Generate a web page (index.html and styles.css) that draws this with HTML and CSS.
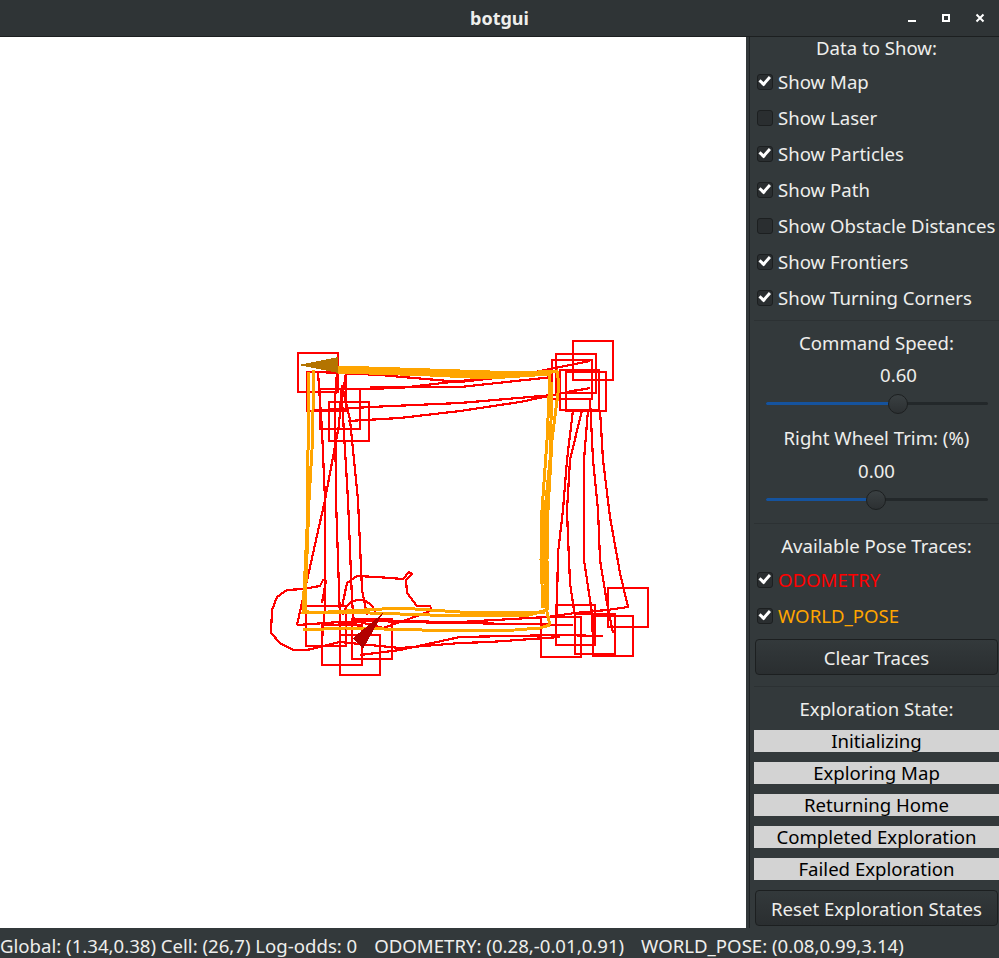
FILE: index.html
```html
<!DOCTYPE html>
<html lang="en">
<head>
    <meta charset="UTF-8">
    <title>botgui</title>
    <link rel="stylesheet" href="styles.css">
</head>
<body>

<header class="titlebar">
    <span class="title">botgui</span>
    <div class="window-buttons">
        <svg width="10" height="10" viewBox="0 0 10 10"><rect x="1" y="7" width="8" height="2" fill="#fff"/></svg>
        <svg width="10" height="10" viewBox="0 0 10 10"><path d="M1 1h8v8h-8z M3 3v4h4v-4z" fill="#fff" fill-rule="evenodd"/></svg>
        <svg width="10" height="10" viewBox="0 0 10 10"><path d="M1.5 1.5l7 7M8.5 1.5l-7 7" stroke="#fff" stroke-width="2" fill="none"/></svg>
    </div>
</header>

<div class="main">
    <div class="map">
        <svg width="746" height="891" viewBox="0 37 746 891" shape-rendering="crispEdges">
            <!-- odometry trace -->
            <g fill="none" stroke="#ff0000" stroke-width="2.2">
                <path d="M318 372L322 430L325 500L325 607L322 640"/>
                <path d="M337 372L335 400L336 500L340 620L340 640"/>
                <path d="M346 372L342 400L348 500L352 600L354 625"/>
                <path d="M342 385L350 420L358 500L362 590L367 615"/>
                <path d="M342 385L339 425L325 500L297 625"/>
                <path d="M318 372L380 375L460 382L505 377L550 373"/>
                <path d="M360 389L400 388L460 381L520 375L590 361"/>
                <path d="M370 387L460 387L553 377"/>
                <path d="M307 411L370 407L460 403L553 395L590 388"/>
                <path d="M348 421L400 418L460 411L520 402L577 390"/>
                <path d="M573 410L567 460L563 510L558 553L557 603L556 625"/>
                <path d="M582 410L570 460L567 510L568 537L570 583L575 617"/>
                <path d="M588 410L584 460L584 560L592 613L593 643"/>
                <path d="M600 410L603 460L610 517L620 573L628 607L607 610L575 613L547 617"/>
                <path d="M590 400L593 460L598 510L600 560L607 603L613 633"/>
                <path d="M297 625L340 622L380 621L460 622L547 617"/>
                <path d="M338 623L356 622M338 625L356 624"/>
                <path d="M352 620L403 622L460 623L573 625"/>
                <path d="M360 655L400 650L460 637L560 635L603 636"/>
                <path d="M340 642L400 648L460 643L490 642L560 637"/>
                <path d="M303 589L287 590L277 597L272 610L271 633L280 643L293 650L307 650L340 642"/>
                <path d="M303 589L320 586L323 580L326 581L322 603"/>
                <path d="M342 607L347 583L357 576L377 577L403 579L409 572L412 574L406 580L407 593L417 606L430 606L432 610"/>
                <path d="M343 615A17 20 0 0 1 376 615"/>
                <path d="M368 635L352 620L383 628L420 615L432 610"/>
            </g>
            <!-- turning corners -->
            <g fill="none" stroke="#ff0000" stroke-width="2">
                <rect x="298" y="353" width="40" height="39"/>
                <rect x="307" y="372" width="39" height="39"/>
                <rect x="320" y="389" width="40" height="40"/>
                <rect x="329" y="402" width="40" height="39"/>
                <rect x="573" y="341" width="40" height="39"/>
                <rect x="556" y="354" width="40" height="39"/>
                <rect x="552" y="360" width="40" height="39"/>
                <rect x="566" y="372" width="40" height="39"/>
                <rect x="560" y="370" width="39" height="40"/>
                <rect x="306" y="606" width="40" height="40"/>
                <rect x="322" y="625" width="40" height="40"/>
                <rect x="340" y="635" width="40" height="40"/>
                <rect x="352" y="619" width="40" height="40"/>
                <rect x="608" y="588" width="40" height="39"/>
                <rect x="556" y="605" width="39" height="40"/>
                <rect x="541" y="617" width="40" height="40"/>
                <rect x="575" y="614" width="40" height="40"/>
                <rect x="593" y="616" width="40" height="40"/>
            </g>
            <!-- world pose trace -->
            <g fill="none" stroke="#ffa500" stroke-width="3">
                <path d="M308 372L308 450L307 530L303 612L340 612L460 616L530 615L546 610"/>
                <path d="M314 370L312 450L309 500L305 610L310 613L400 608L460 612L545 612"/>
                <path d="M338 367L400 369L460 371L520 373L557 371L559 385L552 440L548 510L547 560L548 610"/>
                <path d="M338 370L430 372L490 375L550 372"/>
                <path d="M338 372L430 375L490 378L550 374L547 440L542 510L541 560L543 608"/>
                <path d="M552 382L550 460L545 510L544 560L546 608L550 625"/>
                <path d="M550 625L540 628L515 630L460 631L345 628L303 630"/>
            </g>
            <polygon points="298,365 338,357 338,373" fill="#b37400"/>
            <polygon points="383,613 353,638 363,649" fill="#b30000"/>
        </svg>
    </div>

    <aside class="panel">
        <div class="heading first">Data to Show:</div>
        <label class="check-row"><span class="box checked"></span>Show Map</label>
        <label class="check-row"><span class="box"></span>Show Laser</label>
        <label class="check-row"><span class="box checked"></span>Show Particles</label>
        <label class="check-row"><span class="box checked"></span>Show Path</label>
        <label class="check-row"><span class="box"></span>Show Obstacle Distances</label>
        <label class="check-row"><span class="box checked"></span>Show Frontiers</label>
        <label class="check-row"><span class="box checked"></span>Show Turning Corners</label>
        <hr class="sep">

        <div class="heading">Command Speed:</div>
        <div class="slider-value value-speed">0.60</div>
        <div class="slider slider-speed"><div class="fill" style="width: 132px"></div><div class="handle" style="left: 122px"></div></div>
        <div class="heading trim">Right Wheel Trim: (%)</div>
        <div class="slider-value">0.00</div>
        <div class="slider slider-trim"><div class="fill" style="width: 110px"></div><div class="handle" style="left: 100px"></div></div>
        <hr class="sep sep-traces">

        <div class="heading heading-traces">Available Pose Traces:</div>
        <label class="check-row"><span class="box checked"></span><span class="odometry">ODOMETRY</span></label>
        <label class="check-row"><span class="box checked"></span><span class="world-pose">WORLD_POSE</span></label>
        <button class="btn btn-clear">Clear Traces</button>
        <hr class="sep sep-state">

        <div class="heading">Exploration State:</div>
        <div class="states">
            <div class="state">Initializing</div>
            <div class="state">Exploring Map</div>
            <div class="state">Returning Home</div>
            <div class="state">Completed Exploration</div>
            <div class="state">Failed Exploration</div>
        </div>
        <button class="btn btn-reset">Reset Exploration States</button>
    </aside>
</div>

<footer class="statusbar">
    <span>Global: (1.34,0.38) Cell: (26,7) Log-odds: 0</span>
    <span class="status-odometry">ODOMETRY: (0.28,-0.01,0.91)</span>
    <span class="status-pose">WORLD_POSE: (0.08,0.99,3.14)</span>
</footer>

</body>
</html>
```

FILE: styles.css
```css
body {
    margin: 0;
    width: 999px;
    height: 958px;
    overflow: hidden;
    background-color: #33393b;
    color: #eeeeec;
    font-family: "Noto Sans", sans-serif;
    font-size: 18.6px;
}

.titlebar {
    height: 36px;
    display: flex;
    align-items: center;
    justify-content: center;
    position: relative;
    background-color: #2f3436;
    border-bottom: 1px solid #1c1f20;
}

.title {
    font-weight: bold;
    font-size: 18px;
    color: #eeeeec;
}

.window-buttons {
    position: absolute;
    right: 14px;
    top: 13px;
    display: flex;
    gap: 24px;
}

.window-buttons svg {
    display: block;
}

.main {
    display: flex;
    height: 891px;
}

.map {
    width: 746px;
    background-color: #fff;
}

.map svg {
    display: block;
}

.panel {
    flex: none;
    width: 250px;
    margin-left: 3px;
    padding-left: 4px;
    border-left: 1px solid #1f2324;
    box-sizing: border-box;
}

.heading {
    height: 36px;
    line-height: 36px;
    text-align: center;
    white-space: nowrap;
}

.heading.first {
    height: 22px;
    line-height: 22px;
    margin-bottom: 4px;
}

.heading.trim {
    height: 37px;
}

.heading-traces {
    height: 33px;
}

.check-row {
    height: 36px;
    display: flex;
    align-items: center;
    padding-left: 3px;
    white-space: nowrap;
}

.box {
    width: 14px;
    height: 14px;
    margin: 2px 5px 0 0;
    flex: none;
    background-color: #2a2e30;
    border: 1px solid #1c1f20;
    border-radius: 3px;
    position: relative;
}

.box.checked::after {
    content: "";
    position: absolute;
    left: 2px;
    top: 2px;
    width: 11px;
    height: 7px;
    border-left: 3px solid #fff;
    border-bottom: 3px solid #fff;
    transform: rotate(-48deg) translate(0, -1px);
    transform-origin: center;
    box-sizing: border-box;
}

.sep {
    height: 1px;
    margin: 5px 0 4px;
    border: 0;
    background-color: #2c3133;
}

.slider-value {
    height: 28px;
    line-height: 28px;
    text-align: center;
}

.value-speed {
    padding-left: 44px;
}

.slider {
    height: 3px;
    margin: 14px 11px 14px 12px;
    position: relative;
    background-color: #23282a;
    border-radius: 2px;
}

.slider-speed {
    margin-top: 13px;
    margin-bottom: 15px;
}

.slider-trim {
    margin-top: 13px;
}

.fill {
    height: 3px;
    background-color: #15539e;
    border-radius: 2px;
}

.handle {
    position: absolute;
    top: -8px;
    width: 20px;
    height: 20px;
    box-sizing: border-box;
    border: 1px solid #1c1f20;
    border-radius: 50%;
    background: linear-gradient(#3a4042, #2c3032);
}

.sep-traces {
    margin-top: 22px;
    margin-bottom: 4px;
}

.odometry {
    color: #ff0000;
}

.world-pose {
    color: #ffa500;
}

.btn {
    display: block;
    width: 243px;
    height: 36px;
    margin-left: 1px;
    padding: 0;
    color: #eeeeec;
    font-family: inherit;
    font-size: 18.6px;
    background: linear-gradient(#33393b, #2a2e30);
    border: 1px solid #1c1f20;
    border-radius: 4px;
    white-space: nowrap;
}

.btn-clear {
    margin-top: 6px;
}

.sep-state {
    margin-top: 11px;
    margin-bottom: 4px;
}

.states {
    display: flex;
    flex-direction: column;
    gap: 10px;
    margin-top: 3px;
}

.state {
    height: 22px;
    line-height: 22px;
    text-align: center;
    color: #000;
    background-color: #d3d3d3;
    white-space: nowrap;
}

.btn-reset {
    margin-top: 10px;
}

.statusbar {
    height: 30px;
    line-height: 35px;
    display: flex;
    white-space: nowrap;
    overflow: hidden;
}

.status-odometry {
    margin-left: 17px;
}

.status-pose {
    margin-left: 17px;
}
```
